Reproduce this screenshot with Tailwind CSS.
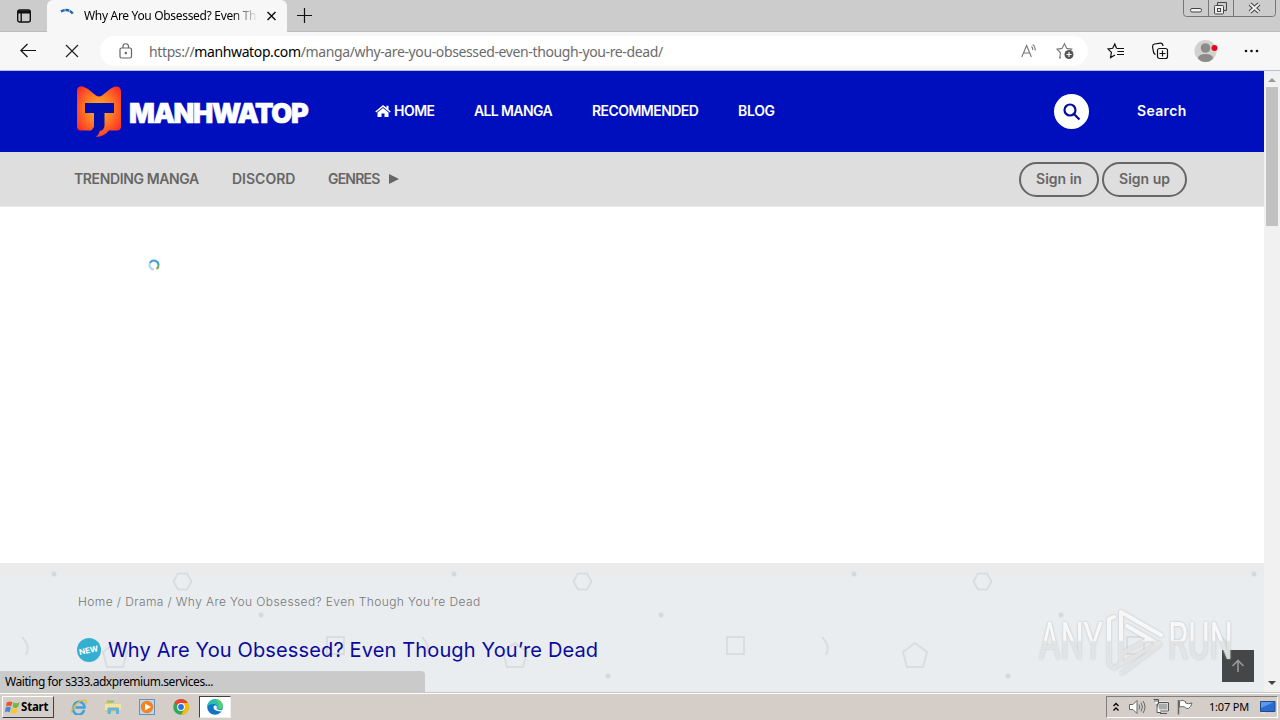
<!DOCTYPE html>
<html lang="en" class="h-full">
<head>
    <meta charset="UTF-8">
    <meta name="viewport" content="width=device-width, initial-scale=1.0">
    <title>Why Are You Obsessed? Even Though You're Dead</title>
    <script src="https://cdn.jsdelivr.net/npm/@tailwindcss/browser@4"></script>
</head>
<body class="w-[1280px] h-[720px] overflow-hidden flex flex-col bg-white font-['Noto_Sans',sans-serif] text-black">

    <!-- Tab strip -->
    <div class="h-8 shrink-0 flex bg-[#cccccc] border-b border-[#bdbdbd]">
        <div class="w-[47px] h-8 flex items-center pl-4">
            <svg class="w-4 h-4" viewBox="0 0 16 16" fill="none" stroke="#111" stroke-width="1.4">
                <rect x="1.7" y="2" width="12.6" height="12" rx="2" />
                <path d="M2 4h12" stroke-width="3" />
                <path d="M5.2 5v9" />
            </svg>
        </div>
        <div class="w-[240px] h-8 flex items-center bg-[#f7f7f7] rounded-t-md">
            <svg class="ml-3 w-4 h-4 shrink-0" viewBox="0 0 16 16" fill="none" stroke="#1d66ad" stroke-width="2.4">
                <path d="M2 3.500C6 1 11 1.500 14 6" stroke-dasharray="4 .6" />
            </svg>
            <div class="ml-[9px] w-[174px] overflow-hidden whitespace-nowrap text-[12px] tracking-[-0.320px] mask-r-from-85% mask-r-to-100%">Why Are You Obsessed? Even Tho</div>
            <svg class="ml-2 w-3 h-3 shrink-0" viewBox="0 0 12 12" stroke="#111" stroke-width="1.5"><path d="M1.500 2l8 8M9.500 2l-8 8" /></svg>
        </div>
        <svg class="ml-[9px] mt-2 w-4 h-4" viewBox="0 0 16 16" stroke="#111" stroke-width="1.2"><path d="M1 7.500h15M8.500 0v15" /></svg>
        <svg class="ml-auto w-[97px] h-[18px]" viewBox="0 0 97 18" fill="none" stroke="#777">
            <path d="M.5 0v13.500q0 3 3 3h86q3 0 3-3V0M25.500 0v16M50.500 0v16" />
            <g stroke="#444">
                <rect x="7.500" y="8.500" width="11" height="3.500" rx="1.500" fill="#f2f2f2" />
                <path d="M34.500 5V2.500h9v8H41" />
                <rect x="31.500" y="5.500" width="9" height="8.500" rx="1" fill="#eee" />
                <rect x="34.500" y="8.500" width="3" height="3" />
                <path d="M67 4l9 8M76 4l-9 8" stroke-width="4" />
                <path d="M67 4l9 8M76 4l-9 8" stroke="#eee" stroke-width="2" />
            </g>
        </svg>
    </div>

    <!-- Toolbar -->
    <div class="h-[39px] shrink-0 flex items-center bg-[#f7f7f7] border-b border-[#b5c0d8]">
        <svg class="ml-5 w-4 h-4" viewBox="0 0 16 16" fill="none" stroke="#111" stroke-width="1.2"><path d="M16 7.500H.8M7.500 1L.8 7.500l6.700 6.500" /></svg>
        <svg class="ml-7 w-4 h-4" viewBox="0 0 16 16" stroke="#222" stroke-width="1.2"><path d="M2 2l12 12M14 2L2 14" /></svg>
        <div class="ml-[20px] w-[988px] h-[30px] flex items-center bg-white rounded-full">
            <svg class="ml-[19px] w-[14px] h-4" viewBox="0 0 14 16" fill="none" stroke="#666" stroke-width="1.2">
                <rect x="1" y="5" width="11.500" height="10" rx="1.500" />
                <path d="M4 5V3.500a2.700 2.700 0 015.500 0V5" />
                <circle cx="6.800" cy="10" r=".6" fill="#666" />
            </svg>
            <div class="ml-4 w-[540px] whitespace-nowrap text-[14px] text-[#6b6b6b] tracking-[-0.375px]">https://<span class="text-black">manhwatop.com</span>/manga/why-are-you-obsessed-even-though-you-re-dead/</div>
            <svg class="ml-auto w-4 h-4" viewBox="0 0 16 16" fill="none" stroke="#777" stroke-width="1.1">
                <path d="M1.800 14L6.600 2.500 11.400 14M3.400 10h6.400M11.500 3.500q1.500 1.300 1.200 3.500M12.700 1.500q3 2 2.400 6" />
            </svg>
            <svg class="ml-5 mr-3.5 w-[18px] h-[18px]" viewBox="0 0 18 18" fill="none" stroke="#777" stroke-width="1.1">
                <path d="M5 15.200L3.700 16l.8-5.200L1 7.200l5-.8L8.500 1.700 10.800 6.400l5 .8-1.500 1.500" />
                <circle cx="13" cy="12.500" r="4.500" fill="#555" stroke="none" />
                <path d="M10.500 12.500h5M13 10v5" stroke="#fff" />
            </svg>
        </div>
        <svg class="ml-[19px] w-[18px] h-[18px]" viewBox="0 0 18 18" fill="none" stroke="#111" stroke-width="1.2">
            <path d="M9.500 6.200L7.800 2 5.700 6.300 1 7l3.400 3.400-.8 5.100L8 13M9.500 6.500h7.500M10.500 9.500H17M10 12.500h7" />
        </svg>
        <svg class="ml-[26px] w-[18px] h-[18px]" viewBox="0 0 18 18" fill="none" stroke="#111" stroke-width="1.2">
            <rect x="6.500" y="6.500" width="10" height="10" rx="2" />
            <path d="M11.500 8.500v6M8.500 11.500h6M4.500 12.500Q3 12 2.500 10L1.500 4.500q0-2 2-2.500L9.500 1.200q2-.1 2.500 2.800" />
        </svg>
        <svg class="ml-[25px] w-[24px] h-[24px]" viewBox="0 0 24 24">
            <circle cx="11.500" cy="12" r="11" fill="#d3d1cf" />
            <circle cx="11.500" cy="9" r="4.800" fill="#8d8b89" />
            <path d="M4 19.500q0-4.500 7.500-4.500T19 19.500q-3 3.500-7.500 3.500T4 19.500z" fill="#8d8b89" />
            <circle cx="20.500" cy="9" r="3" fill="#e00b1c" />
        </svg>
        <svg class="ml-[26px] w-4 h-4" viewBox="0 0 16 16" fill="#111"><circle cx="2" cy="8" r="1.300" /><circle cx="7.500" cy="8" r="1.300" /><circle cx="13" cy="8" r="1.300" /></svg>
    </div>

    <!-- Viewport -->
    <div class="relative h-[622px] shrink-0 flex font-['Inter',sans-serif]">
        <main class="w-[1264px] flex flex-col">
            <header class="h-[81px] shrink-0 flex items-center bg-[#000fbd] text-white text-[14px] font-semibold">
                <svg class="ml-[76px] w-[47px] h-[54px]" viewBox="0 0 47 54">
                    <defs>
                        <radialGradient id="flame" cx=".5" cy=".45" r=".62">
                            <stop offset="0" stop-color="#ffb52e" />
                            <stop offset=".5" stop-color="#ff7a25" />
                            <stop offset="1" stop-color="#fb2c28" />
                        </radialGradient>
                    </defs>
                    <path d="M1 5Q2 .5 7 1.500Q11 3 15 6.500L20 10.500q3 2 6 0L31 6.500Q36 2 40 1.500q4-.5 5 4v36q0 4-4 4H33q-5 6.500-13 6.500 3-2 4-6.500H5q-4 0-4-4z" fill="url(#flame)" />
                    <path d="M9 18H38V28H28.500V40q0 5-4.500 6H15l3-4V28H9z" fill="#000fae" />
                </svg>
                <div class="ml-[6px] w-[246px] whitespace-nowrap text-[27px] leading-none font-black tracking-[-1.350px] pt-1 [-webkit-text-stroke:0.6px_#fff]">MANHWATOP</div>
                <nav class="flex whitespace-nowrap pb-0.5">
                    <a class="w-[99px] flex items-center gap-[3px] tracking-[-0.500px]">
                        <svg class="w-4 h-[14px]" viewBox="0 0 16 14" fill="#fff">
                            <path d="M8 1L.3 7.400l.9 1.100L8 2.900l6.800 5.600.9-1.100-2.200-1.900V1.800h-2v2z" />
                            <path d="M8 4L2.500 8.500V13h4V9.500h3V13h4V8.500z" />
                        </svg>
                        HOME
                    </a>
                    <a class="w-[118px] tracking-[-0.620px]">ALL MANGA</a>
                    <a class="w-[146px] tracking-[-0.550px]">RECOMMENDED</a>
                    <a class="tracking-[-0.300px]">BLOG</a>
                </nav>
                <div class="ml-auto w-[35px] h-[35px] flex items-center justify-center rounded-full bg-white">
                    <svg class="w-[18px] h-[18px]" viewBox="0 0 18 18" fill="none" stroke="#000f9f" stroke-width="2.200"><circle cx="7" cy="7" r="5.500" /><path d="M11 11l5.500 5.500" /></svg>
                </div>
                <a class="ml-12 mr-[77px] w-[50px] pb-0.5 tracking-[0.350px]">Search</a>
            </header>

            <div class="h-[55px] shrink-0 flex items-center bg-[#dedede] border-b border-[#ebebeb] text-[#666] text-[14px] font-semibold whitespace-nowrap">
                <a class="ml-[74px] w-[158px] pb-0.5 tracking-[-0.380px]">TRENDING MANGA</a>
                <a class="w-[96px] pb-0.5">DISCORD</a>
                <a class="flex items-center gap-[9px] pb-0.5 tracking-[-0.800px]">GENRES
                    <svg class="mt-px w-[10px] h-[12px]" viewBox="0 0 10 12" fill="#666"><path d="M0 1l10 5-10 5z" /></svg>
                </a>
                <div class="ml-auto mr-[77px] flex gap-[3px]">
                    <a class="w-20 h-[35px] pb-0.5 flex items-center justify-center border-2 border-[#666] rounded-full">Sign in</a>
                    <a class="w-[85px] h-[35px] pb-0.5 flex items-center justify-center border-2 border-[#666] rounded-full">Sign up</a>
                </div>
            </div>

            <div class="h-[356px] shrink-0 pl-[148px] pt-[52px]">
                <svg class="w-3 h-3" viewBox="0 0 12 12" fill="none" stroke-width="2">
                    <path d="M6 10.500A4.500 4.500 0 012 4" stroke="#a9d8f3" />
                    <path d="M2 4a4.500 4.500 0 018.500 2" stroke="#459de0" />
                    <path d="M10.500 6a4.500 4.500 0 01-2 4" stroke="#67ad50" />
                </svg>
            </div>

            <section class="relative grow bg-[#e9edf0]">
                <svg class="absolute inset-0 w-full h-full" fill="none" stroke="#dadddf" stroke-width="2">
                    <defs>
                        <pattern id="shapes" width="400" height="260" patternUnits="userSpaceOnUse">
                            <path d="M178 10.500h9l4.500 8-4.500 8h-9l-4.500-8z" />
                            <path d="M327 74h17v17h-17z" />
                            <path d="M115 80l12 9-4 15h-16l-4-15z" />
                            <path d="M22 74q9 9 4 18" />
                            <g fill="#d6d9db" stroke="none">
                                <circle cx="54" cy="11" r="2.500" />
                                <circle cx="261" cy="52" r="2.500" />
                                <circle cx="208" cy="113" r="2.500" />
                            </g>
                        </pattern>
                    </defs>
                    <rect width="1264" height="12" fill="#ebebeb" stroke="none" />
                    <rect width="1264" height="130" fill="url(#shapes)" stroke="none" />
                </svg>
                <div class="relative pl-[78px] pt-[30px] text-[12px] leading-[18px] text-[#777] font-light whitespace-pre tracking-[0.400px]">Home / Drama / Why Are You Obsessed? Even Though You’re Dead</div>
                <div class="relative flex items-center pl-[77px] pt-[24px]">
                    <span class="w-6 h-6 flex items-center justify-center rounded-full bg-[#35afd0] text-white text-[8px] font-bold"><span class="-rotate-12">NEW</span></span>
                    <h1 class="ml-[7px] text-[20px] leading-[30px] text-[#0a0a9d] whitespace-nowrap tracking-[0.140px]">Why Are You Obsessed? Even Though You’re Dead</h1>
                </div>
            </section>
        </main>

        <!-- Scrollbar -->
        <div class="w-4 flex flex-col items-center bg-[#f1f1f1]">
            <svg class="mt-[7px] w-2 h-1 shrink-0" viewBox="0 0 8 4" fill="#999"><path d="M0 4l4-4 4 4z" /></svg>
            <div class="mt-[5px] w-3 h-[139px] bg-[#c1c1c1]"></div>
            <svg class="mt-auto mb-2 w-2 h-1 shrink-0" viewBox="0 0 8 4" fill="#444"><path d="M0 0l4 4 4-4z" /></svg>
        </div>

        <!-- Overlays: status bubble, back to top, watermark -->
        <div class="absolute left-0 bottom-0 w-[425px] h-[22px] pl-[5px] leading-[21px] bg-[#cacaca] rounded-tr-sm text-[12px] font-['Noto_Sans',sans-serif] tracking-[-0.440px]">Waiting for s333.adxpremium.services...</div>
        <div class="absolute left-[1222px] top-[579px] w-8 h-8 flex items-center justify-center bg-[#444647]">
            <svg class="w-3.5 h-3.5" viewBox="0 0 14 14" fill="none" stroke="#999" stroke-width="1.600"><path d="M7 13V2M1.500 7L7 1.500 12.500 7" /></svg>
        </div>
        <svg class="absolute left-[1030px] top-[534px] w-[210px] h-[72px] drop-shadow-[0_0_1px_#bbb]" viewBox="0 0 210 72" font-family="Roboto" font-size="51" fill="#fff">
            <defs>
                <linearGradient id="fade" x1="0" y1="0" x2="0" y2="72" gradientUnits="userSpaceOnUse">
                    <stop offset=".49" stop-color="#fafafa" stop-opacity=".95" />
                    <stop offset=".51" stop-color="#e8e9ea" stop-opacity=".8" />
                </linearGradient>
            </defs>
            <g fill="url(#fade)">
                <text x="9" y="54" textLength="64" lengthAdjust="spacingAndGlyphs">ANY</text>
                <text x="138" y="54" textLength="65" lengthAdjust="spacingAndGlyphs">RUN</text>
            </g>
            <g fill="none" stroke="url(#fade)" stroke-width="4" stroke-linejoin="round" stroke-linecap="round">
                <path d="M84 12l-5 2V59l5 4 45-25" />
                <path d="M91 58V7L131 30M97 21l33 19-38 28M91 49l28-15" />
            </g>
        </svg>
    </div>

    <!-- Taskbar -->
    <div class="grow flex items-center bg-[#d5cec8] border-t border-white shadow-[0_-1px_0_#c6c6c0] relative font-['Noto_Sans',sans-serif]">
        <div class="ml-0.5 w-[52px] h-[22px] flex items-center pl-[2px] border border-t-white border-l-white border-b-[#404040] border-r-[#404040] text-[11.500px] font-bold tracking-[-0.200px]">
            <svg class="mr-[1px] w-[15px] h-4 shrink-0" viewBox="0 0 16 16">
                <path d="M2 3q3-2 6 0L6.500 7.500Q4 6 1 7.500z" fill="#e8562a" />
                <path d="M9 3q3 2 6.500 0L14 8q-3 2-6 0z" fill="#74b843" />
                <path d="M.8 8.500q3-1.500 5.500 0L5 13.500q-3-1.500-5 0z" fill="#3f87d9" />
                <path d="M7.300 9q3 2 6.300 0L12.500 14q-3 2-6.500 0z" fill="#fac62d" />
            </svg>
            Start
        </div>
        <svg class="ml-[17px] w-4 h-4" viewBox="0 0 16 16" fill="none">
            <path d="M13 11A5.500 5.500 0 112.500 8 5.500 5.500 0 0113.500 8.500H4.500" stroke="#39a2e0" stroke-width="2.500" />
            <path d="M1 14Q-.5 11 5 5.500T15 1.500q1 1-.5 3.500" stroke="#e8bb35" stroke-width="1.300" />
        </svg>
        <svg class="ml-[18px] w-4 h-4" viewBox="0 0 16 16">
            <path d="M0 3h6l1.500 1.500H15V13H0z" fill="#e9cb68" />
            <path d="M2 1.500h7v2H2z" fill="#7fc37a" />
            <path d="M0 5h16v6H0z" fill="#f5e49c" />
            <path d="M2.500 15V9.500q0-1 1-1H13q1 0 1 1V15h-3v-3.500H6V15z" fill="#65b4dc" />
        </svg>
        <svg class="ml-[18px] w-4 h-4" viewBox="0 0 16 16">
            <rect x=".5" y=".5" width="15" height="15" fill="#bcd7ee" stroke="#6791b8" />
            <circle cx="8" cy="8" r="6.200" fill="#f5821f" />
            <path d="M6 4.500l6 3.500-6 3.500z" fill="#fff" />
        </svg>
        <svg class="ml-[18px] w-4 h-4" viewBox="0 0 16 16">
            <circle cx="8" cy="8" r="7.800" fill="#35a853" />
            <path d="M8 8L1.200 4.100A7.800 7.800 0 0114.800 4.100z" fill="#ea4335" />
            <path d="M8 8V4h6.800A7.800 7.800 0 018 15.800L11.500 10z" fill="#fbbc05" />
            <circle cx="8" cy="8" r="3.900" fill="#fff" />
            <circle cx="8" cy="8" r="2.900" fill="#2d72de" />
        </svg>
        <div class="ml-[10px] w-8 h-[22px] flex items-center justify-center bg-white border border-t-[#404040] border-l-[#404040] border-b-[#eee] border-r-[#eee]">
            <svg class="w-4 h-4" viewBox="0 0 16 16">
                <circle cx="8" cy="8" r="7.800" fill="#1174c6" />
                <path d="M.2 8A7.800 7.800 0 018 .2c5 0 8 3.600 7.800 6.800C15.500 11 10 11 9.500 9.500 11 7 9 5 6.500 5 3.500 5 1 6 .2 8z" fill="#29bfb0" />
                <path d="M8 .2c5 0 8 3.600 7.800 6.800-.3 3-3 3.500-4.500 3.300Q14 5 8 .2z" fill="#5bd269" />
                <path d="M6.500 7.500Q6 12 14 12.500q1-.8 1.300-2-4 1.500-5.800-1Q10.500 8 9 6.500 7 6 6.500 7.500z" fill="#fff" />
            </svg>
        </div>

        <!-- System tray -->
        <div class="ml-auto mr-0.5 w-[172px] h-[22px] flex items-center border border-t-[#808080] border-l-[#808080] border-b-white border-r-white">
            <svg class="ml-1.5 w-[6px] h-2.5 shrink-0" viewBox="0 0 6 10" fill="none" stroke="#000" stroke-width="1.300"><path d="M.5 4L3 1.500 5.500 4M.5 8.500L3 6l2.500 2.500" /></svg>
            <svg class="ml-[10px] w-[17px] h-4 shrink-0" viewBox="0 0 17 16" fill="none" stroke="#666">
                <path d="M.5 5.500H4l4-4v13l-4-4H.5z" fill="#fff" />
                <path d="M10 5.500q1.500 2.500 0 5M12 3.500q3 4.500 0 9M14 2q4 6 0 12" />
            </svg>
            <svg class="ml-[7px] w-4 h-4 shrink-0" viewBox="0 0 16 16" stroke="#555">
                <rect x="4.500" y="3.500" width="11" height="8" fill="#aaa" stroke="#fff" stroke-width="2" />
                <path d="M4.500 3.500h11v8.500h-11zM7 14.500h7" fill="none" />
                <path d="M.5.500h5V5H4v8.500h4" fill="#fff" />
                <path d="M2 .5V3M4 .5V3" />
            </svg>
            <svg class="ml-[8px] w-4 h-4 shrink-0" viewBox="0 0 16 16" fill="#fff" stroke="#666">
                <path d="M1.500 1v14.500" stroke-width="1.500" />
                <path d="M2.500 2Q6 .5 8.500 2.500V4q3 1.500 6.500 0Q14 8 11.500 9.500q-2 .5-4-1.500-2-1-5 0z" />
            </svg>
            <span class="ml-[16px] w-[40px] whitespace-nowrap text-[11px] tracking-[-0.200px]">1:07 PM</span>
            <svg class="ml-[11px] w-4 h-4 shrink-0" viewBox="0 0 16 16">
                <path d="M.5 2.500h14.500v10H.5z" fill="#2a6bd2" stroke="#234a83" />
                <path d="M1 3h13L1 9z" fill="#5c98ec" />
                <path d="M1 13h4l1 2H2z" fill="#ddd" />
            </svg>
        </div>
    </div>
</body>
</html>
